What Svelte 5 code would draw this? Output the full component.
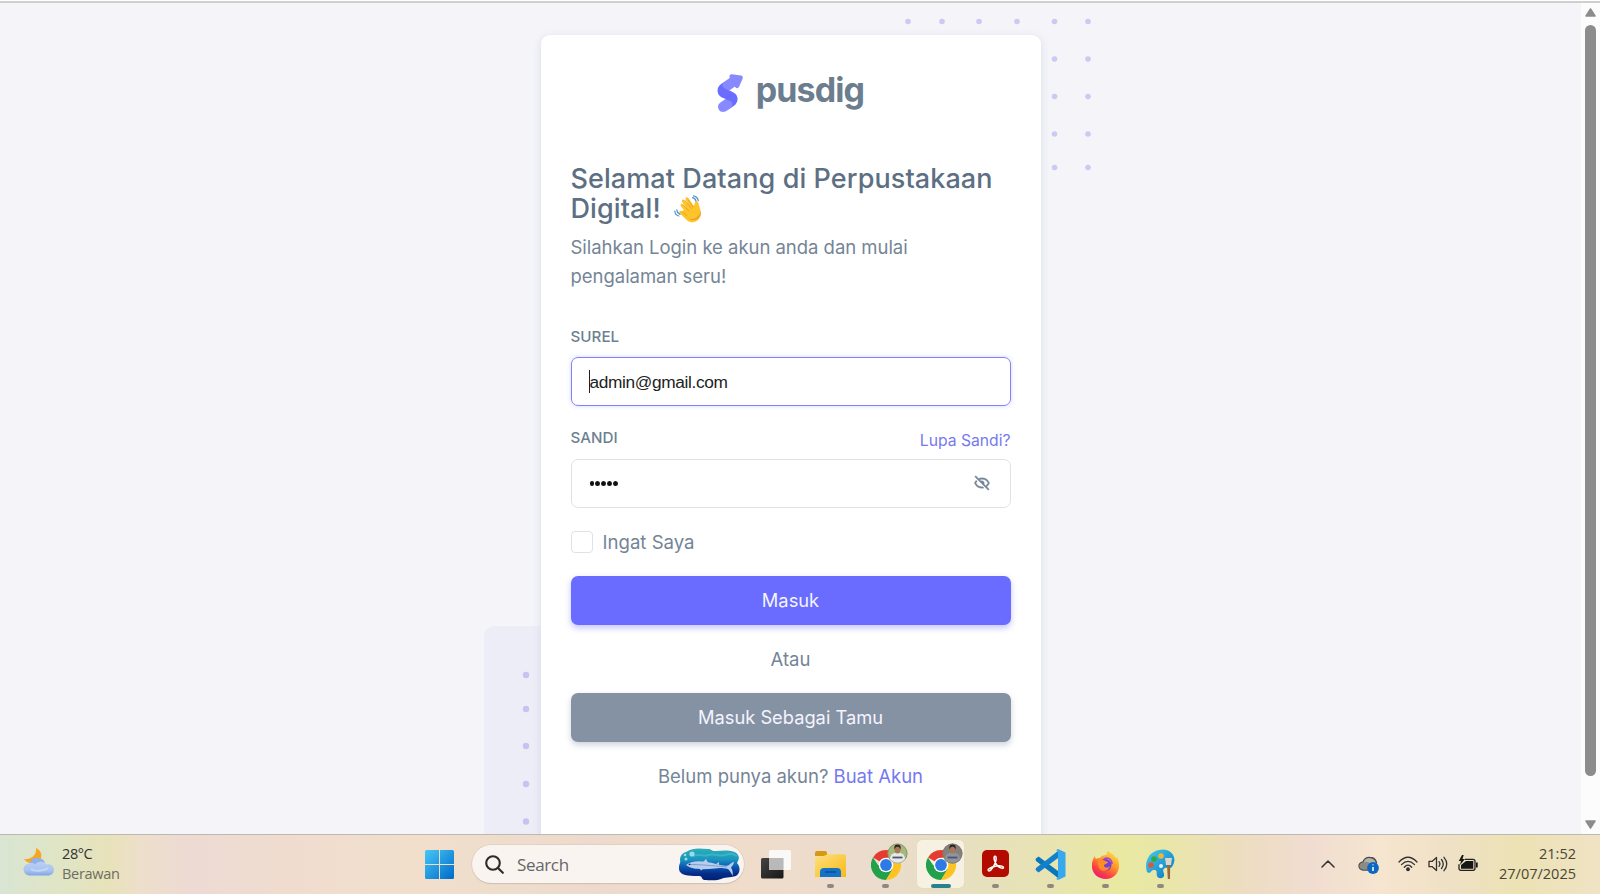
<script>
  let email = $state('admin@gmail.com');
  const topDots = [[908,21.5],[942,21.5],[979,21.5],[1017,21.5],[1054.500,21.5],[1088,21.5],[1054.500,59],[1088,59],[1054.500,96.500],[1088,96.500],[1054.500,134],[1088,134],[1054.500,167.500],[1088,167.500]];
  const leftDots = [675, 709, 746, 784, 821.500];
</script>

<div class="screen">
  <div class="page">
    <main>
      <svg class="decor" width="1581" height="834" viewBox="0 0 1581 834">
        <rect x="484" y="626" width="240" height="240" rx="10" fill="#ededf8" />
        {#each topDots as [x, y]}<circle cx={x} cy={y} r="2.8" fill="#cdc9f3" />{/each}
        {#each leftDots as y}<circle cx="526" cy={y} r="3.2" fill="#c5c3f2" />{/each}
      </svg>
      <section class="card">
        <header class="brand">
          <svg width="28" height="46" viewBox="0 0 25 42">
            <defs>
              <path id="ribbon" d="M13.79.358 3.398 7.442C.567 9.694-.38 12.479.558 15.796c.132.434.538 1.991 2.566 3.433.69.492 2.2 1.154 4.527 1.988l-.053.036-4.963 3.296c-2.19 1.751-2.547 3.96-1.071 6.625 1.274 1.643 3.645 2.09 5.528 1.365 1.255-.483 4.364-2.538 9.326-6.164 1.616-1.875 2.28-3.92 1.99-6.136-.444-2.704-2.23-4.66-5.358-5.864l-2.13-.903 7.7-5.488Z" />
              <clipPath id="ribbonClip"><use href="#ribbon" /></clipPath>
            </defs>
            <g transform="translate(0 8)">
              <use href="#ribbon" fill="#696cff" />
              <g clip-path="url(#ribbonClip)" fill="#fff" fill-opacity=".2">
                <path d="M5.473 6.005c-1.42 2.211-1.11 4.067.93 5.568 2.212.999 3.697 1.644 4.455 1.936l4.65.924 3.111-6.449L13.792.358C13.579.511 10.806 2.394 5.473 6.005Z" />
                <path d="m7.5 21.23 4.823 2.086c1.846 1.442 2.074 3.172.685 5.19-1.388 2.018-2.698 3.284-3.928 3.798L4.132 34 0 31.161c-.558-3.342-.558-5.104 0-5.284.837-.27 2.78-3.052 3.305-3.347.35-.197 1.749-.63 4.196-1.3Z" />
              </g>
            </g>
            <path transform="rotate(-300 19 11)" fill="#8789ff" d="m20.6 7.133 5 6.667c.663.884.484 2.137-.4 2.8a2 2 0 0 1-1.2.4H14a2 2 0 0 1-1.6-3.2l5-6.667a2 2 0 0 1 3.2 0Z" />
          </svg>
          <span>pusdig</span>
        </header>
        <h1>Selamat Datang di Perpustakaan<br />Digital!
          <svg class="wave" width="29" height="28" viewBox="0 0 29 28">
            <path d="M10 15 6.9 11.2c-1.2-1.8.8-3.2 2.1-1.7l3.5 3.3-4.2-5.5c-1.4-2.1 1-3.7 2.5-1.9l4.3 5-3.4-5.9c-1-2 1.3-3.3 2.6-1.5l4.9 7.2c.9.7 1.700-.7 1.600-2.200 0-2.200 2.900-2.400 3.500-.3l2.200 7.800c2.600 8.500-7 15.500-13.500 9.700L6 18.500c-2-2.200.2-3.800 2-2Z" fill="#ffc32b" />
            <path d="m9 9.500 5.500 6M11 5.400l6.400 8M14.200 4.800l5 7.400M8 16.500l4.500 4" stroke="#e79a19" stroke-width=".8" fill="none" stroke-linecap="round" />
            <path d="M26.800 16c1 7-6.600 11.700-12.200 7.500 5 2 10.400-1 12.200-7.500Z" fill="#eb9c23" />
            <path d="M18.500 2.700c2 .3 3 1.500 3.500 3.300M19.500.8c3 .6 4.300 2.200 4.800 4.800M2.800 14.800c.2 2.200 1.200 3.800 3.200 4.600M.8 16.200c.2 2.500 1.600 4.200 4 4.800" fill="none" stroke="#4f91c7" stroke-width="1.200" stroke-linecap="round" />
          </svg>
        </h1>
        <p class="intro">Silahkan Login ke akun anda dan mulai<br />pengalaman seru!</p>
        <form onsubmit={(e) => e.preventDefault()}>
          <div class="labels"><label for="email">SUREL</label></div>
          <div class="field focus"><i class="caret"></i><input id="email" bind:value={email} /></div>
          <div class="labels second"><label for="secret">SANDI</label><a class="forgot" href="#top">Lupa Sandi?</a></div>
          <div class="field" id="secret">
            <span class="bullets"><i></i><i></i><i></i><i></i><i></i></span>
            <svg class="eye" width="18" height="18" viewBox="0 0 24 24" fill="#748596" stroke="#748596" stroke-width=".5">
              <path d="M12 19c.946 0 1.81-.103 2.598-.281l-1.757-1.757c-.273.021-.55.038-.841.038-5.351 0-7.424-3.846-7.926-5a8.642 8.642 0 0 1 1.508-2.297L4.184 8.305c-1.538 1.667-2.121 3.346-2.132 3.379a.994.994 0 0 0 0 .633C2.073 12.383 4.367 19 12 19zm0-14c-1.837 0-3.346.396-4.604.981L3.707 2.293 2.293 3.707l18 18 1.414-1.414-3.319-3.319c2.614-1.951 3.547-4.615 3.561-4.657a.994.994 0 0 0 0-.633C21.927 11.617 19.633 5 12 5zm4.972 10.558-2.28-2.28c.19-.39.308-.819.308-1.278 0-1.641-1.359-3-3-3-.459 0-.888.118-1.277.309L8.915 7.501A9.26 9.26 0 0 1 12 7c5.351 0 7.424 3.846 7.926 5-.302.692-1.166 2.342-2.954 3.558z" />
            </svg>
          </div>
          <label class="remember"><i></i><span>Ingat Saya</span></label>
          <button class="primary">Masuk</button>
          <p class="or">Atau</p>
          <button class="guest">Masuk Sebagai Tamu</button>
        </form>
        <p class="signup"><span>Belum punya akun?</span> <a href="#top">Buat Akun</a></p>
      </section>
    </main>
    <aside class="scroll">
      <svg width="11" height="9" viewBox="0 0 11 9"><path d="M5.500 1 10 8H1Z" fill="#8c8c8c" stroke="#8c8c8c" stroke-width="1.500" stroke-linejoin="round" /></svg>
      <div class="thumb"></div>
      <svg width="11" height="9" viewBox="0 0 11 9"><path d="M5.500 8 10 1H1Z" fill="#8c8c8c" stroke="#8c8c8c" stroke-width="1.500" stroke-linejoin="round" /></svg>
    </aside>
  </div>

  <footer class="taskbar">
    <div class="weather">
      <svg width="32" height="30" viewBox="0 0 32 30">
        <defs><linearGradient id="cl" x1="0" y1="0" x2="0" y2="1"><stop stop-color="#b9d0f5" /><stop offset=".65" stop-color="#a9c3ef" /><stop offset="1" stop-color="#7ea4e4" /></linearGradient></defs>
        <path d="M13 1c5 2 7 8 4 12-4 5-13 4-16-1 7 1 13-4 12-11Z" fill="#f5a623" />
        <path d="M7 19c-1-6 4-9 8-8 5 0 8 4 7 8Z" fill="#92b1e8" />
        <path d="M7 28.500a6 6 0 0 1-1-12c3-1 5 0 6 1 3-4 10-3 11 0 5-1 8 2 8 5.500 0 3-3 5.500-6 5.500Z" fill="url(#cl)" />
        <path d="M8 22c4 3 13 2 17-1" stroke="#cfdef8" stroke-width="2" fill="none" opacity=".7" />
      </svg>
      <div class="wt"><b>28°C</b><span>Berawan</span></div>
    </div>

    <div class="apps">
      <svg class="win" width="29" height="29" viewBox="0 0 29 29">
        <defs><linearGradient id="wn" x1="0" y1="0" x2="1" y2="1"><stop stop-color="#45c8f7" /><stop offset="1" stop-color="#0069c8" /></linearGradient></defs>
        <path fill="url(#wn)" d="M1.500 0H14v14H0V1.500Q0 0 1.500 0ZM15 0h12.500Q29 0 29 1.500V14H15ZM0 15h14v14H1.500Q0 29 0 27.500ZM15 15h14v12.500q0 1.500-1.500 1.500H15Z" />
      </svg>
      <div class="search">
        <svg width="19" height="19" viewBox="0 0 19 19" fill="none" stroke="#2b2b2b" stroke-width="2.100" stroke-linecap="round"><circle cx="8" cy="8" r="6.800" /><path d="m13 13 4.800 4.800" /></svg>
        <span>Search</span>
        <svg class="fish" width="61" height="33" viewBox="0 0 61 33">
          <defs><linearGradient id="sea" x1="0" y1="0" x2="0" y2="1"><stop stop-color="#2bb0b8" /><stop offset=".35" stop-color="#1a93c0" /><stop offset=".62" stop-color="#0a4fae" /><stop offset=".8" stop-color="#052b86" /><stop offset="1" stop-color="#04206f" /></linearGradient></defs>
          <path fill="url(#sea)" d="M7 4C15-1 22 1 29 1c4 0 2 2 8 2 10-1 19-1 22 4 2 3 0 6-1 8 4 4 3 11-1 13-6 2-12 1-15 3-4 2-12 1-17 1-4-2 0-4-7-4-9 0-19 0-18-9 0-3 2-4 1-7 0-4 2-7 6-8Z" />
          <path d="M14 8c6-3 10 1 16-1s10 2 16 0 8-1 12 1" stroke="#5bd2cf" stroke-width="2" opacity=".4" fill="none" />
          <path fill="#b7cdec" d="M7 17c6-5 17-4.500 30-1 6 1.500 8 2 12 1.500 3-2 5-4 6-3.500-.5 3-2 4-3 5.500 2 3 2 6 1.500 8.500-1-3-2.500-5-4.500-7-5-1-9-1.500-13-.5-12 1-23 1.500-29-3.500Z" />
          <path d="M10 16.500c10 0 22 1 38 2.500" stroke="#7598cc" stroke-width=".9" fill="none" />
          <path fill="#b7cdec" d="m24 14 3-3 2 3.500ZM37 16l3-2v3ZM20 19.500l2 3 3-2.500Z" /><circle cx="10.500" cy="16.300" r=".9" fill="#0d2d6c" />
          <g fill="#9adbe8"><circle cx="13" cy="6" r="2.600" /><circle cx="7" cy="11" r="1.500" /><circle cx="6" cy="7" r="1.300" /></g>
        </svg>
      </div>
      <div class="tasks">
        <div class="task">
          <svg width="30" height="29" viewBox="0 0 30 29"><defs><linearGradient id="tv" x1="0" y1="0" x2="1" y2="1"><stop stop-color="#444" /><stop offset="1" stop-color="#171717" /></linearGradient></defs><rect y="8" width="22.500" height="20.500" rx="1.500" fill="url(#tv)" /><rect x="8" y="0" width="22" height="20" rx="1.500" fill="#fbfbfb" fill-opacity=".93" /><path d="M8 8h14.500v12H8Z" fill="#b9b9b9" /></svg>
        </div>
        <div class="task run">
          <svg width="31" height="29" viewBox="0 0 31 29"><defs><linearGradient id="fd" x1="0" y1="0" x2="1" y2="1"><stop stop-color="#ffe17b" /><stop offset="1" stop-color="#f6b91b" /></linearGradient></defs><path d="M0 9V3q0-2 2-2h8q2 0 2 2v3H0Z" fill="#d89814" /><path d="M0 7q6 0 10-1.500 2-1.300 4-1.300h15q2 0 2 2V27H0Z" fill="url(#fd)" /><path d="M5 27v-5q0-4 4-4h13q4 0 4 4v5Z" fill="#1473c7" /><path d="M10 22h11" stroke="#0c4c8c" stroke-width="1.400" /></svg>
        </div>
        {#each [0, 1] as k}
          <div class="task run" class:active={k === 1}>
            <svg width="37" height="38" viewBox="0 0 37 38">
              <path d="M15 22 2 14.500A15 15 0 0 1 28 14.500Z" fill="#e63b30" />
              <path d="M15 22h-8L2 14.500A15 15 0 0 0 15 37l7-11Z" fill="#22a04a" />
              <path d="m15 22 1-7.500h12A15 15 0 0 1 15 37l6.500-11Z" fill="#fcc322" />
              <circle cx="15" cy="22" r="7.300" fill="#fff" /><circle cx="15" cy="22" r="5.900" fill="#2c7be5" />
              <g transform="translate(26.500 10.500)">
                <circle r="10" fill={k ? '#85807c' : '#a5b87a'} /><path d="M-8 6Q-7-1 0-1t8 7a10 10 0 0 1-16 0Z" fill={k ? '#8f959e' : '#e7e9e8'} />
                <ellipse cy="-4" rx="3" ry="4" fill="#a87859" /><path d="M-3-4q-1-5 3-5t3 5q-1-3-3-3t-3 3Z" fill="#292421" /><path d="M-5 4H5" stroke="#4b566b" stroke-width="1.800" /><circle r="9.600" fill="none" stroke="#77756d" stroke-opacity=".5" />
              </g>
            </svg>
          </div>
        {/each}
        <div class="task run">
          <svg width="27" height="27" viewBox="0 0 27 27"><rect width="27" height="27" rx="5" fill="#b30b00" /><path d="M6.300 20.500c-1-1.500 3-3.500 7-4.300 4-.8 8-.2 8.200 1.200.1 1.600-3.500.9-6-1.700-2.800-2.800-4.400-8.500-2.700-9.500 2-.6 1.800 5-.7 9.200-2 3.600-4.600 6.600-5.800 5.100Z" fill="none" stroke="#fff" stroke-width="1.500" /></svg>
        </div>
        <div class="task run">
          <svg width="31" height="31" viewBox="0 0 31 31"><path d="M1.300 9.300 3.600 7.500 23 22v7L1 12Q0 10.500 1.300 9.300Z" fill="#0878bd" /><path d="M1.300 21.700 3.600 23.500 23 9V2L1 19Q0 20.500 1.300 21.700Z" fill="#1380cb" /><path d="m23 0 7.500 3.500v24L23 31l-2-1.200 2-.8V2l-2-.8Z" fill="#36a8ed" /></svg>
        </div>
        <div class="task run">
          <svg width="27" height="28" viewBox="0 0 27 28"><defs><linearGradient id="ff" x1=".8" y1="0" x2=".2" y2="1"><stop stop-color="#ffe44c" /><stop offset=".4" stop-color="#ff9727" /><stop offset=".75" stop-color="#fb3b45" /><stop offset="1" stop-color="#e31587" /></linearGradient></defs><path d="M3 5c0 1 0 2 1 3 1-1 2-1 4-1 2-3 5-3 7-3-1-1 0-3 1-4 2 2 6 3 8 7l1-1c5 9 1 22-11 22C1 28-4 15 3 5Z" fill="url(#ff)" /><circle cx="13.500" cy="14" r="6" fill="#7241d7" /><path d="M6 8c3-1 5 0 7 2 2 0 3 1 3 2-2 1-4 1-4 3 1 2 4 2 6 0-1 5-8 7-11 2Q5 12 6 8Z" fill="#ff8c25" /><path d="M11 9c4-4 9-1 9 4" stroke="#a445d0" stroke-width="1.600" fill="none" /></svg>
        </div>
        <div class="task run">
          <svg width="29" height="31" viewBox="0 0 29 31"><defs><linearGradient id="pt" x1="0" y1="0" x2="1" y2="1"><stop stop-color="#47cdf2" /><stop offset="1" stop-color="#0a75bd" /></linearGradient></defs><path d="M13 1c10-3 19 6 14 15-2 5-5 2-8 3-4 2 0 5-1 8-1 3-6 3-7 0-1-3 1-6-3-6-3-1-3 5-7 2C-2 14 2 3 13 1Z" fill="url(#pt)" /><circle cx="15" cy="17" r="2" fill="#e9f6fc" /><circle cx="5" cy="16" r="2.800" fill="#d9583f" /><circle cx="8" cy="10" r="2.800" fill="#37a936" /><circle cx="15" cy="7" r="2.800" fill="#e8b93a" /><path d="M19 9h7l-1 7h-5Z" fill="#ddd5c5" /><path d="M21 16h3.200L24 30h-2.200Z" fill="#9a6a3c" /></svg>
        </div>
      </div>
    </div>

    <div class="tray">
      <svg class="chev" width="14" height="8" viewBox="0 0 14 8" fill="none" stroke="#333" stroke-width="1.500" stroke-linecap="round" stroke-linejoin="round"><path d="m1 7 6-6 6 6" /></svg>
      <svg class="cloud" width="21" height="18" viewBox="0 0 21 18"><path d="M5 14q-4-1-4-4 0-3 4-4 2-5 7-4.500 5 0 6.500 5L12 14Z" fill="#b5b2ac" stroke="#4b4b4b" stroke-width="1.300" /><path d="M5 6.500q5-2 7 1l4 2-5 4H5q-3.500-1-3.500-3.500 0-3 3.500-3.500Z" fill="#8d8b87" /><circle cx="15" cy="12" r="5.900" fill="#0a67c2" /><path d="M15 11v4M15 8.500v.700" stroke="#fff" stroke-width="1.500" /></svg>
      <svg class="wifi" width="20" height="16" viewBox="0 0 20 16" fill="none" stroke="#333" stroke-width="1.300" stroke-linecap="round"><path d="M1 6Q10-3.500 19 6M3.500 8.600q6.500-6.500 13 0M6.300 11.200q3.700-4 7.400 0" /><circle cx="10" cy="13.300" r="1.300" fill="#222" /></svg>
      <svg class="vol" width="20" height="16" viewBox="0 0 20 16" fill="none" stroke="#333" stroke-width="1.300" stroke-linecap="round" stroke-linejoin="round"><path d="M1 5.300h3.300L8.500 1.500v13l-4.200-3.800H1ZM11 5.700q1.800 2.300 0 4.600M13.500 3.500q3.500 4.500 0 9M16 1.300q5.500 6.700 0 13.400" /></svg>
      <svg class="bat" width="20" height="17" viewBox="0 0 20 17"><path d="M7 4.300h8q2 0 2 2v7q0 2-2 2H3q-2 0-2-2v-4" fill="none" stroke="#222" stroke-width="1.300" /><path d="M8 6h7.300v7.700H3V10Zm10 1.500h1.700v5H18ZM4 0 .8 6H3L2 10l5-6H4.500L5.700 0Z" fill="#171717" /></svg>
      <div class="clock"><span class="t">21:52</span><span>27/07/2025</span></div>
    </div>
  </footer>
</div>

<style>
  :global(body) { margin: 0; overflow: hidden; }
  * { box-sizing: border-box; }
  .screen { width: 1600px; height: 894px; display: grid; grid-template-rows: 834px 60px; font-family: Inter, "Open Sans", sans-serif; overflow: hidden; }
  .page { display: flex; overflow: hidden; background: #f4f4f9; border-top: 1px solid #fff; position: relative; height: 834px; }
  .page::before { content: ''; position: absolute; inset: 0 0 auto; height: 2px; background: #cfcfcf; z-index: 2; }
  main { width: 1581px; display: flex; justify-content: center; padding-top: 34px; align-items: flex-start; }
  .decor { position: absolute; left: 0; top: -1px; }
  .card { position: relative; width: 500px; height: 830px; background: #fff; border-radius: 9px; padding: 0 30px; box-shadow: 0 2px 9px rgba(67, 89, 113, .13); color: #748596; }
  .brand { display: flex; justify-content: center; align-items: flex-start; gap: 11px; height: 129px; padding-top: 31.500px; }
  .brand span { font-size: 34px; font-weight: 700; line-height: 40px; letter-spacing: -.9px; color: #6b7d8e; margin-top: 3.500px; }
  h1 { margin: 0; font-size: 27px; line-height: 30px; font-weight: 500; color: #5c6f83; height: 69px; white-space: nowrap; letter-spacing: .09px; }
  .wave { vertical-align: -5px; margin-left: 6px; }
  p { margin: 0; font-size: 18.500px; line-height: 29px; white-space: nowrap; }
  .intro { height: 93px; letter-spacing: -.03px; }
  .labels { height: 31px; display: flex; justify-content: space-between; font-size: 15.200px; line-height: 22px; font-weight: 500; color: #6d7f90; }
  .labels.second { margin-top: 21px; height: 32px; }
  .forgot { font-size: 15.700px; font-weight: 400; line-height: 28px; }
  a { color: #7678f0; text-decoration: none; }
  .field { height: 49px; border: 1.500px solid #dfe3e6; border-radius: 7px; display: flex; align-items: center; padding: 0 18.500px 0 18px; position: relative; }
  .field.focus { border-color: #8385ee; box-shadow: 0 0 4px rgba(105, 108, 255, .3); }
  .field input { border: 0; outline: 0; padding: 1px 0 0; width: 100%; font: 17.300px "Liberation Sans", Arial, sans-serif; letter-spacing: -.35px; color: #222; background: transparent; }
  .caret { position: absolute; left: 17.500px; top: 12px; width: 1px; height: 23px; background: #222; }
  .bullets { display: flex; gap: 1.200px; }
  .bullets i { width: 4.800px; height: 5px; border-radius: 50%; background: #111; }
  .eye { margin: -1px 0 0 auto; }
  .remember { display: flex; align-items: center; gap: 10px; height: 22px; margin: 23px 0; font-size: 18.600px; }
  .remember i { width: 22px; height: 22px; border: 1.500px solid #dfe3e6; border-radius: 4px; }
  button { display: block; width: 440px; height: 49px; border: 0; border-radius: 7px; color: #f4f4ff; font: 18.300px Inter, sans-serif; padding: 0 0 1.500px; }
  .primary { background: #696cff; box-shadow: 0 3px 6px rgba(105, 108, 255, .4); }
  .guest { background: #8592a3; box-shadow: 0 3px 6px rgba(133, 146, 163, .4); }
  .or { text-align: center; margin: 20px 0 19px; }
  .signup { text-align: center; margin-top: 20px; }

  .scroll { width: 19px; background: #fcfcfc; display: flex; flex-direction: column; align-items: center; padding: 7px 0 5px; }
  .thumb { width: 11px; height: 751px; border-radius: 6px; background: #8c8c8c; margin: 8px 4px auto; }

  .taskbar { position: relative; border-top: 1px solid #bdb9b2; display: grid; grid-template-columns: 425px 1fr 300px; font-family: "Open Sans", "Noto Sans", sans-serif; color: #333;
    background: linear-gradient(90deg, #d9e5d3 0, #dfe5c5 60px, #e8e2ba 110px, #eddfcb 140px, #eddad3 190px, #efdccf 280px, #f1dfcc 420px, #eddacc 590px, #efdccb 740px, #ebdccd 880px, #e7dfc1 960px, #e8e3b4 1040px, #e9e9a2 1120px, #e9e6a9 1170px, #edddc0 1240px, #f0ddd1 1310px, #f6e5cf 1380px, #efe1c5 1450px, #ece2b4 1520px, #efe3c4 1600px); }
  .weather { display: flex; padding: 12px 0 0 23px; gap: 7px; }
  .wt { display: flex; flex-direction: column; font-size: 14.500px; line-height: 20px; margin-top: -3px; }
  .wt b { font-weight: 400; letter-spacing: -.4px; }
  .wt span { color: #6e6e5e; letter-spacing: -.28px; }
  .apps { display: flex; align-items: flex-start; }
  .win { margin: 15px 18px 0 0; }
  .search { width: 272px; height: 38px; margin-top: 10px; border-radius: 19px; background: #f9f4f0; box-shadow: 0 0 0 .5px #d4c7bc, 0 1px 1px #c7b9ae; display: flex; align-items: center; padding: 0 4px 0 13px; font-size: 17px; color: #666; }
  .search span { margin-left: 13px; letter-spacing: -.35px; }
  .fish { margin-left: auto; }
  .tasks { display: flex; margin-left: 4px; }
  .task { width: 55px; height: 59px; position: relative; display: flex; justify-content: center; align-items: center; }
  .task svg { position: relative; }
  .task:nth-child(3) svg, .task:nth-child(4) svg { top: -3px; left: 4px; }
  .task:nth-child(5) svg { top: -1.500px; }
  .task.run::after { content: ''; position: absolute; left: 24px; top: 49px; width: 7px; height: 4px; border-radius: 2px; background: #91877e; }
  .task.active::before { content: ''; position: absolute; left: 4px; top: 5px; width: 47px; height: 48px; border-radius: 5px; background: #f6f1e1; box-shadow: 0 0 1px #cfc6ae; }
  .task.active::after { width: 20px; left: 18px; background: #278191; }
  .tray { display: flex; align-items: flex-start; padding-left: 21px; }
  .chev { margin: 25px 23px 0 0; }
  .cloud { margin: 21px 19px 0 0; }
  .wifi { margin: 21px 10px 0 0; }
  .vol { margin: 21px 10px 0 0; }
  .bat { margin: 20px 0 0; }
  .clock { margin: 9px 24px 0 auto; display: flex; flex-direction: column; align-items: flex-end; font-size: 14.500px; line-height: 20px; letter-spacing: 0; color: #494536; }
</style>
